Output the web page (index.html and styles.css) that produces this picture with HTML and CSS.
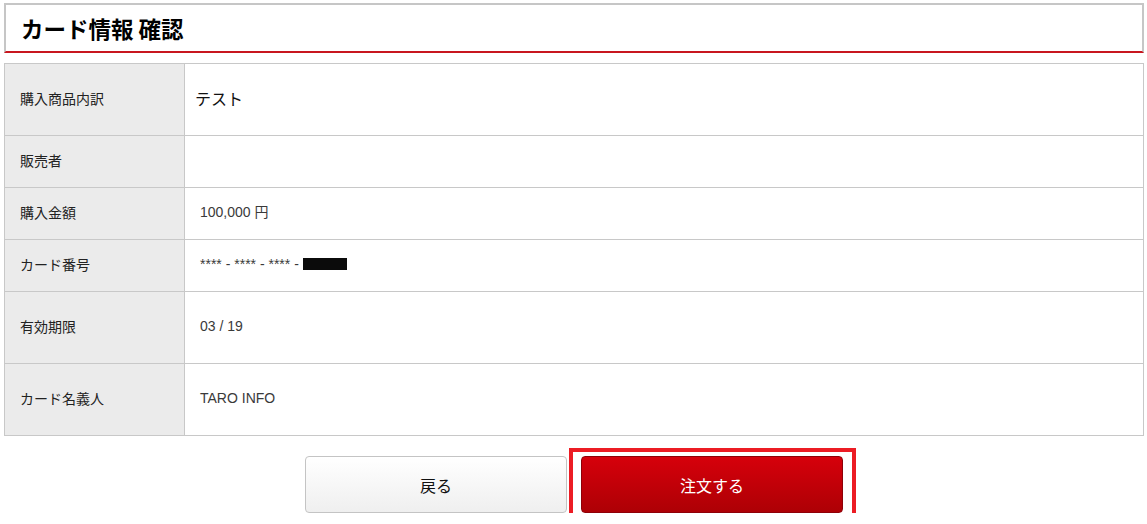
FILE: index.html
```html
<!DOCTYPE html>
<html lang="ja">
<head>
<meta charset="utf-8">
<title>カード情報 確認</title>
<link rel="stylesheet" href="styles.css">
</head>
<body>
<div class="page">
  <div class="heading">
    <h1 class="heading-title">カード情報 確認</h1>
  </div>
  <table class="info-table">
    <tr class="row-tall">
      <th>購入商品内訳</th>
      <td><span class="item-name">テスト</span></td>
    </tr>
    <tr class="row">
      <th>販売者</th>
      <td></td>
    </tr>
    <tr class="row">
      <th>購入金額</th>
      <td class="value">100,000 円</td>
    </tr>
    <tr class="row">
      <th>カード番号</th>
      <td class="value">**** - **** - **** - <span class="masked"></span></td>
    </tr>
    <tr class="row-tall">
      <th>有効期限</th>
      <td class="value">03 / 19</td>
    </tr>
    <tr class="row-tall">
      <th>カード名義人</th>
      <td class="value">TARO INFO</td>
    </tr>
  </table>
  <div class="actions">
    <button class="btn btn-back" type="button">戻る</button>
    <div class="submit-wrap">
      <button class="btn btn-submit" type="button">注文する</button>
    </div>
  </div>
</div>
</body>
</html>
```

FILE: styles.css
```css
html, body {
  margin: 0;
  padding: 0;
  background: #ffffff;
}

body {
  font-family: "Noto Sans CJK JP", "Liberation Sans", sans-serif;
  color: #333333;
}

.page {
  padding: 3px 3px 0 4px;
}

.heading {
  height: 46px;
  border-top: 2px solid #c6c6c6;
  border-left: 2px solid #c6c6c6;
  border-right: 2px solid #c6c6c6;
  border-bottom: 2px solid #c8161f;
  display: flex;
  align-items: center;
  padding-left: 15px;
}

.heading-title {
  margin: 0;
  font-size: 22.5px;
  font-weight: bold;
  color: #000000;
  line-height: 1;
}

.info-table {
  margin-top: 10px;
  width: 100%;
  border-collapse: collapse;
  border: 1px solid #c8c8c8;
}

.info-table th,
.info-table td {
  border: 1px solid #c8c8c8;
  vertical-align: middle;
  padding: 0 15px 3px 15px;
  line-height: 20px;
}

.info-table th {
  width: 149px;
  background: #ebebeb;
  text-align: left;
  font-weight: normal;
  font-size: 14px;
  color: #222222;
}

.row-tall th, .row-tall td {
  height: 68px;
}

.row th, .row td {
  height: 48px;
}

.info-table td {
  background: #ffffff;
}

.item-name {
  font-size: 16px;
  color: #111111;
  margin-left: -5px;
}

.value {
  font-family: "Liberation Sans", "Noto Sans CJK JP", sans-serif;
  font-size: 14px;
  color: #3a3a3a;
}

.masked {
  display: inline-block;
  width: 44px;
  height: 12px;
  background: #0b0b0b;
  vertical-align: -1px;
}

.actions {
  margin-top: 20px;
  display: flex;
  align-items: flex-start;
  justify-content: center;
  gap: 14px;
}

.btn {
  width: 262px;
  height: 57px;
  border-radius: 4px;
  font-family: "Noto Sans CJK JP", sans-serif;
  font-size: 16px;
  line-height: 1;
  cursor: pointer;
  padding: 0;
  box-sizing: border-box;
}

.btn-back {
  border: 1px solid #c4c4c4;
  background: linear-gradient(#ffffff, #efefef);
  color: #111111;
}

.submit-wrap {
  margin: -8px -13px -7px -12px;
  padding: 4px 9px 3px 8px;
  border: 4px solid #ec1c24;
}

.btn-submit {
  display: block;
  border: 1px solid #8e0008;
  background: linear-gradient(#d6000b, #ad0005);
  color: #ffffff;
}
```
